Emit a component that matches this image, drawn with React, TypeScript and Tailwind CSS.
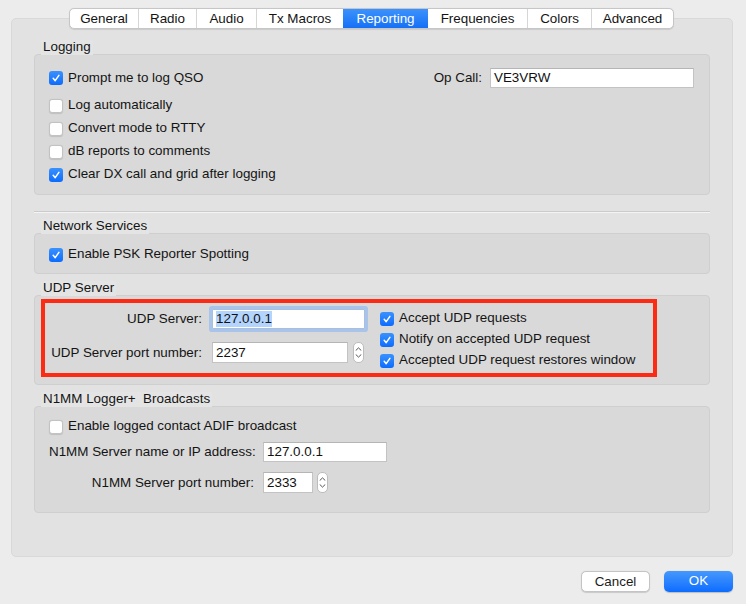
import React from "react";

const font = { fontFamily: '"Liberation Sans", Arial, sans-serif' };

function Check({ on }: { on?: boolean }) {
  if (on) {
    return (
      <span className="w-[14px] h-[14px] rounded-[3px] bg-linear-to-b from-[#3a91fd] to-[#0a6bfd] flex items-center justify-center shrink-0">
        <svg width="10" height="10" viewBox="0 0 10 10">
          <path d="M2.2 5.3 L4.2 7.7 L7.9 2.3" stroke="white" strokeWidth="1.5" fill="none" strokeLinecap="round" strokeLinejoin="round" />
        </svg>
      </span>
    );
  }
  return <span className="w-[14px] h-[14px] rounded-[3px] bg-white border border-[#c2c2c2] shadow-[0_0.5px_1px_rgba(0,0,0,0.12)] shrink-0" />;
}

function CheckRow({ on, label, h = "h-[23px]" }: { on?: boolean; label: string; h?: string }) {
  return (
    <div className={`flex items-center gap-[5px] ${h}`}>
      <Check on={on} />
      <span>{label}</span>
    </div>
  );
}

function Stepper() {
  return (
    <span className="w-[11px] h-[21px] rounded-[5px] bg-white border border-[#bcbcbc] flex flex-col items-center justify-center gap-[3px] shrink-0">
      <svg width="7" height="4" viewBox="0 0 7 4">
        <path d="M1 3.3 L3.5 0.9 L6 3.3" stroke="#555" strokeWidth="1" fill="none" strokeLinecap="round" />
      </svg>
      <svg width="7" height="4" viewBox="0 0 7 4">
        <path d="M1 0.7 L3.5 3.1 L6 0.7" stroke="#555" strokeWidth="1" fill="none" strokeLinecap="round" />
      </svg>
    </span>
  );
}

function Field({ value, w, h = "h-[20px]" }: { value: string; w: string; h?: string }) {
  return (
    <div className={`${w} ${h} bg-white border border-[#c3c3c3] border-t-[#b5b5b5] flex items-center pl-[3px] text-[#111]`}>
      {value}
    </div>
  );
}

// group title sits on a patch of panel colour that just covers the box edge
function GroupLabel({ text, mt }: { text: string; mt: string }) {
  return (
    <div className={`${mt} h-[14px] pl-[7px] relative z-10 flex items-start`}>
      <span className="h-[15px] leading-[14px] px-[2px] bg-[#e4e4e4] whitespace-pre">{text}</span>
    </div>
  );
}

const tabs = [
  ["General", "w-[68px]"],
  ["Radio", "w-[58px]"],
  ["Audio", "w-[60px]"],
  ["Tx Macros", "w-[87px]"],
  ["Reporting", "w-[85px]"],
  ["Frequencies", "w-[99px]"],
  ["Colors", "w-[64px]"],
  ["Advanced", "w-[82px]"],
];

export default function App() {
  return (
    <div className="w-[746px] h-[604px] bg-[#ececec] pt-[8px] pl-[11px] pr-[13px] text-[13.4px] text-[#141414] overflow-hidden" style={font}>
      {/* Tabs */}
      <div className="relative z-10 ml-[58px] flex h-[21px] w-max bg-white border border-[#c6c6c6] rounded-[5px] shadow-[0_0.5px_1px_rgba(0,0,0,0.1)] overflow-hidden">
        {tabs.map(([t, w], i) => (
          <div
            key={t}
            className={`${w} h-full flex items-center justify-center pt-[1px] ${i > 0 && t !== "Frequencies" && t !== "Reporting" ? "border-l border-[#d6d6d6]" : ""} ${
              t === "Reporting" ? "bg-linear-to-b from-[#3c92fc] to-[#1470f5] text-white" : ""
            }`}
          >
            {t}
          </div>
        ))}
      </div>

      {/* Panel */}
      <div className="-mt-[11px] h-[539px] bg-[#e2e2e2] border border-[#d9d9d9] rounded-[5px] px-[22px] pt-[21px]">
        {/* Logging */}
        <GroupLabel text="Logging" mt="mt-0" />
        <div className="h-[141px] bg-[#d9d9d9] border border-[#cfcfcf] rounded-[4px] pl-[14px] pr-[15px] pt-[13px]">
          <div className="flex items-center justify-between h-[20px]">
            <CheckRow on label="Prompt me to log QSO" h="h-[20px]" />
            <div className="flex items-center gap-[8px]">
              <span>Op Call:</span>
              <Field value="VE3VRW" w="w-[204px]" />
            </div>
          </div>
          <div className="mt-[6px]">
            <CheckRow label="Log automatically" />
            <CheckRow label="Convert mode to RTTY" />
            <CheckRow label="dB reports to comments" />
            <CheckRow on label="Clear DX call and grid after logging" />
          </div>
        </div>

        <div className="mt-[16px] border-t border-[#cbcbcb] border-b border-b-[#f4f4f4]" />

        {/* Network Services */}
        <GroupLabel text="Network Services" mt="mt-[6px]" />
        <div className="h-[41px] bg-[#d9d9d9] border border-[#cfcfcf] rounded-[4px] pl-[14px] pt-[9px]">
          <CheckRow on label="Enable PSK Reporter Spotting" />
        </div>

        {/* UDP Server */}
        <GroupLabel text="UDP Server" mt="mt-[7px]" />
        <div className="h-[90px] bg-[#d9d9d9] border border-[#cfcfcf] rounded-[4px] pl-[6px] pt-[3px]">
          <div className="w-[616px] h-[78px] border-[4px] border-[#fd2b14] flex">
            <div className="w-[321px] pt-[6px] grid grid-cols-[157px_auto] gap-x-[10px] items-center content-start">
              <span className="text-right whitespace-nowrap">UDP Server:</span>
              <div className="w-[153px] h-[20px] bg-white border border-[#a9bfdc] shadow-[0_0_0_3px_#a8c4ea] rounded-[1px] flex items-center pl-[3px]">
                <span className="bg-[#b3d4fc] text-[#111] leading-[16px]">127.0.0.1</span>
              </div>
              <span className="text-right whitespace-nowrap mt-[13px]">UDP Server port number:</span>
              <div className="flex items-center mt-[13px]">
                <Field value="2237" w="w-[136px]" h="h-[21px]" />
                <span className="ml-[5px]">
                  <Stepper />
                </span>
              </div>
            </div>
            <div className="ml-[14px] pt-[5px] flex flex-col">
              <CheckRow on label="Accept UDP requests" h="h-[21px]" />
              <CheckRow on label="Notify on accepted UDP request" h="h-[21px]" />
              <CheckRow on label="Accepted UDP request restores window" h="h-[21px]" />
            </div>
          </div>
        </div>

        {/* N1MM */}
        <GroupLabel text="N1MM Logger+  Broadcasts" mt="mt-[7px]" />
        <div className="h-[107px] bg-[#d9d9d9] border border-[#cfcfcf] rounded-[4px] pl-[14px] pt-[8px]">
          <CheckRow label="Enable logged contact ADIF broadcast" />
          <div className="grid grid-cols-[205px_auto] gap-x-[9px] items-center mt-[4px]">
            <span className="text-right whitespace-nowrap">N1MM Server name or IP address:</span>
            <Field value="127.0.0.1" w="w-[124px]" />
            <span className="text-right whitespace-nowrap mt-[10px]">N1MM Server port number:</span>
            <div className="flex items-center mt-[10px]">
              <Field value="2333" w="w-[50px]" h="h-[21px]" />
              <span className="ml-[4px]">
                <Stepper />
              </span>
            </div>
          </div>
        </div>
      </div>

      {/* Buttons */}
      <div className="flex justify-end gap-[14px] mt-[14px]">
        <button className="w-[69px] h-[21px] bg-white border border-[#c4c4c4] rounded-[5px] shadow-[0_0.5px_1px_rgba(0,0,0,0.15)] text-[13.4px] text-[#1c1c1c]">
          Cancel
        </button>
        <button className="w-[69px] h-[21px] rounded-[5px] bg-linear-to-b from-[#4598fc] to-[#0a6cfe] text-white text-[13.4px] shadow-[0_0.5px_1px_rgba(0,0,0,0.2)]">
          OK
        </button>
      </div>
    </div>
  );
}
